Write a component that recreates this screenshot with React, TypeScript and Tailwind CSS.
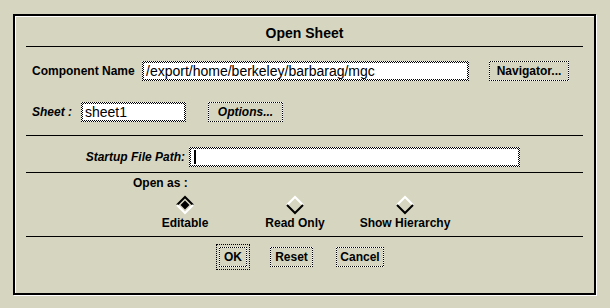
import React from 'react';

const checker =
  'bg-[repeating-conic-gradient(#000_0_25%,#fff_0_50%)] bg-[length:2px_2px]';

function Field({ value, width, cursor }: { value?: string; width: string; cursor?: boolean }) {
  return (
    <div className={`${checker} p-[2px] h-[20px] ${width}`}>
      <div className="bg-white h-full flex items-center pl-[2px] text-[14px] text-black font-['Liberation_Sans',sans-serif] leading-none whitespace-nowrap overflow-hidden">
        {cursor && <span className="w-[2px] h-[14px] bg-black ml-[1px]" />}
        {value}
      </div>
    </div>
  );
}

function Btn({ label, italic, width }: { label: string; italic?: boolean; width: string }) {
  return (
    <div className={`${checker} p-[1px] h-[20px] ${width}`}>
      <div
        className={`bg-[#d6d6c0] h-full flex items-center justify-center text-[12px] font-bold ${italic ? 'italic' : ''}`}
      >
        {label}
      </div>
    </div>
  );
}

function Diamond({ on }: { on?: boolean }) {
  const top = on ? '#000' : '#fff';
  const bottom = on ? '#fff' : '#000';
  return (
    <svg width="20" height="20" viewBox="0 0 20 20" className="block">
      <path d="M2 10 L10 2 L18 10" fill="none" stroke={top} strokeWidth="2" />
      <path d="M2 10 L10 18 L18 10" fill="none" stroke={bottom} strokeWidth="2" />
      {on && <path d="M5.5 10 L10 5.5 L14.5 10 L10 14.5 Z" fill="#000" />}
    </svg>
  );
}

function Rule() {
  return <div className="h-px bg-black mx-[11px]" />;
}

export default function App() {
  const options = [
    { label: 'Editable', on: true },
    { label: 'Read Only' },
    { label: 'Show Hierarchy' },
  ];

  return (
    <div className="w-[610px] h-[308px] bg-[#d6d6c0] pt-[14px] pl-[13px] font-['Liberation_Sans',Arial,sans-serif] text-black">
      <div className="w-[583px] h-[281px] border-2 border-black shadow-[1px_1px_0_#fff,inset_1px_1px_0_#fff] flex flex-col">
        <div className="h-[30px] flex items-center justify-center text-[14px] font-bold pt-[4px]">Open Sheet</div>
        <Rule />

        <div className="flex items-center h-[46px] pl-[17px] pt-[1px]">
          <span className="text-[12px] font-bold w-[110px]">Component Name</span>
          <Field value="/export/home/berkeley/barbarag/mgc" width="w-[327px]" />
          <div className="ml-[20px]">
            <Btn label="Navigator..." width="w-[80px]" />
          </div>
        </div>

        <div className="flex items-center h-[42px] pl-[17px] pb-[4px]">
          <span className="text-[12px] font-bold italic w-[49px]">Sheet :</span>
          <Field value="sheet1" width="w-[105px]" />
          <div className="ml-[22px]">
            <Btn label="Options..." italic width="w-[75px]" />
          </div>
        </div>

        <Rule />

        <div className="flex items-center h-[36px] pt-[5px]">
          <span className="text-[12px] font-bold italic w-[174px] text-right pr-[4px]">Startup File Path:</span>
          <Field width="w-[331px]" cursor />
        </div>

        <Rule />

        <div className="pl-[118px] pt-[4px] text-[12px] font-bold h-[16px] leading-none">Open as :</div>
        <div className="flex pl-[115px] h-[47px]">
          {options.map((o) => (
            <div key={o.label} className="w-[110px] flex flex-col items-center pt-[6px]">
              <Diamond on={o.on} />
              <span className="text-[12px] font-bold -mt-px">{o.label}</span>
            </div>
          ))}
        </div>

        <Rule />

        <div className="flex items-center pl-[201px] pt-[7px] gap-[20px]">
          <div className="border border-dotted border-black p-[2px]">
            <Btn label="OK" width="w-[28px]" />
          </div>
          <Btn label="Reset" width="w-[43px]" />
          <div className="ml-[3px]">
            <Btn label="Cancel" width="w-[48px]" />
          </div>
        </div>
      </div>
    </div>
  );
}
